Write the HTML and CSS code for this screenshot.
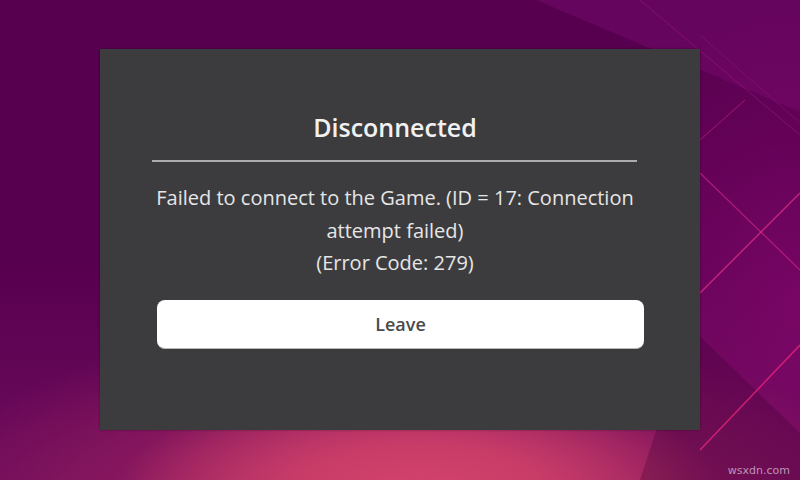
FILE: index.html
```html
<!DOCTYPE html>
<html lang="en">
<head>
<meta charset="utf-8">
<title>Disconnected</title>
<link rel="stylesheet" href="styles.css">
</head>
<body>
<div class="scene">
  <svg class="bg-art" width="800" height="480" viewBox="0 0 800 480" aria-hidden="true">
    <polygon points="536,0 800,0 800,112" fill="#7a0a6e" opacity="0.45"/>
    <polygon points="690,327 800,433 800,480 640,480" fill="#3a0030" opacity="0.28"/>
    <line x1="700" y1="173" x2="800" y2="270" stroke="#ff3aa0" stroke-width="1.2" opacity="0.45"/>
    <line x1="700" y1="293" x2="800" y2="193" stroke="#ff3a90" stroke-width="1.4" opacity="0.6"/>
    <line x1="700" y1="140" x2="745" y2="100" stroke="#ff3aa0" stroke-width="1" opacity="0.4"/>
    <line x1="640" y1="0" x2="800" y2="135" stroke="#a01a8a" stroke-width="1" opacity="0.5"/>
    <line x1="800" y1="345" x2="700" y2="450" stroke="#ff2a80" stroke-width="1.6" opacity="0.65"/>
    <line x1="700" y1="35" x2="800" y2="123" stroke="#9a1a86" stroke-width="1" opacity="0.4"/>
  </svg>
  <div class="dialog">
    <div class="dialog-head">
      <h1 class="title">Disconnected</h1>
    </div>
    <div class="divider"></div>
    <p class="message">Failed to connect to the Game. (ID = 17: Connection<br>attempt failed)<br>(Error Code: 279)</p>
    <button class="leave" type="button">Leave</button>
  </div>
  <span class="watermark">wsxdn.com</span>
</div>
</body>
</html>
```
FILE: styles.css
```css
html, body {
  margin: 0;
  padding: 0;
}
body {
  width: 800px;
  height: 480px;
  overflow: hidden;
  font-family: "Open Sans", "Noto Sans", sans-serif;
}
.scene {
  position: relative;
  width: 800px;
  height: 480px;
  padding: 49px 0 0 100px;
  box-sizing: border-box;
  background:
    radial-gradient(ellipse 300px 110px at 420px 490px, #d4446c 0%, #c83c68 40%, rgba(180,50,104,0) 100%),
    radial-gradient(ellipse 480px 180px at 400px 500px, rgba(190,55,105,0.95) 0%, rgba(150,30,95,0.7) 55%, rgba(100,5,85,0) 100%),
    radial-gradient(ellipse 260px 300px at 800px 300px, rgba(150,10,120,0.5) 0%, rgba(120,0,100,0) 100%),
    linear-gradient(180deg, #56004f 0%, #57004f 55%, #6e0c5c 100%);
}
.bg-art {
  position: absolute;
  left: 0;
  top: 0;
}
.dialog {
  position: relative;
  width: 600px;
  height: 381px;
  background: #3c3c3f;
  box-shadow: 0 0 2px rgba(0,0,0,0.4);
  display: flex;
  flex-direction: column;
  align-items: stretch;
}
.dialog-head {
  height: 111px;
  display: flex;
  align-items: flex-end;
  justify-content: center;
  padding-right: 10px;
  box-sizing: border-box;
}
.title {
  margin: 0 0 15px;
  font-size: 25px;
  line-height: 36px;
  font-weight: 600;
  color: #f1f1f1;
}
.divider {
  height: 2px;
  margin: 0 63px 0 52px;
  background: #acacac;
}
.message {
  margin: 20px 0 0;
  padding-right: 10px;
  text-align: center;
  font-size: 20px;
  line-height: 32.5px;
  color: #e6e6e6;
}
.leave {
  margin: 20px 56px 0 57px;
  height: 49px;
  border: none;
  border-bottom: 1px solid #b8b8b8;
  border-radius: 8px;
  background: #ffffff;
  font-family: "Open Sans", "Noto Sans", sans-serif;
  font-size: 18px;
  font-weight: 600;
  color: #4a4a4a;
  padding: 0;
}
.watermark {
  position: absolute;
  right: 10px;
  bottom: 3px;
  font-family: "DejaVu Sans", sans-serif;
  font-size: 11px;
  color: rgba(225, 210, 225, 0.7);
}
```
